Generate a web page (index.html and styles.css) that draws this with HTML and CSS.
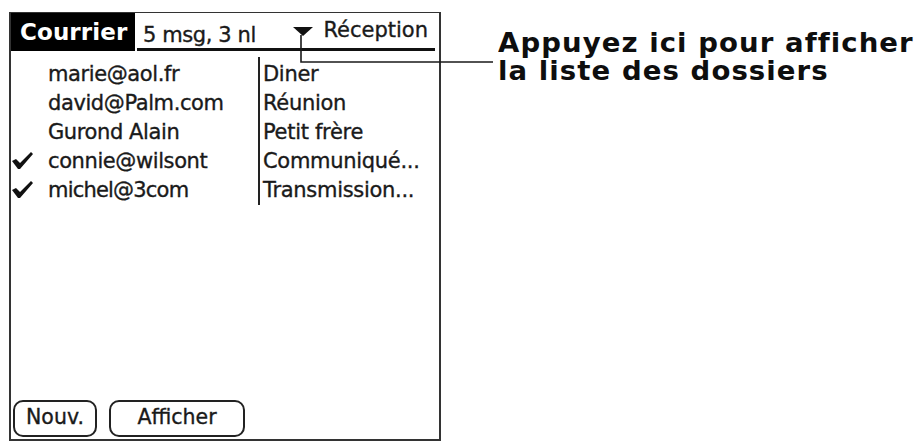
FILE: index.html
```html
<!DOCTYPE html>
<html lang="fr">
<head>
<meta charset="utf-8">
<title>Courrier</title>
<link rel="stylesheet" href="styles.css">
</head>
<body>
<div class="page">
  <div class="device">
    <div class="titlebar">
      <div class="title">Courrier</div>
      <div class="titlerest">
        <span class="count">5 msg, 3 nl</span>
        <span class="folder">
          <svg class="tri" width="20" height="9" viewBox="0 0 20 9"><polygon points="0,0 20,0 10,9" fill="#111"/></svg>
          <span class="folder-name">Réception</span>
        </span>
      </div>
    </div>
    <div class="list">
      <div class="col-names">
        <div class="row"><span class="mark"></span><span>marie@aol.fr</span></div>
        <div class="row"><span class="mark"></span><span>david@Palm.com</span></div>
        <div class="row"><span class="mark"></span><span>Gurond Alain</span></div>
        <div class="row"><span class="mark"><svg width="21" height="17" viewBox="0 0 21 17"><path d="M0 9 L4 7 L8 11 L19 0 L21 2 L8 17 L6 17 Z" fill="#111"/></svg></span><span>connie@wilsont</span></div>
        <div class="row"><span class="mark"><svg width="21" height="17" viewBox="0 0 21 17"><path d="M0 9 L4 7 L8 11 L19 0 L21 2 L8 17 L6 17 Z" fill="#111"/></svg></span><span class="tight">michel@3com</span></div>
      </div>
      <div class="col-subjects">
        <div class="row">Diner</div>
        <div class="row">Réunion</div>
        <div class="row">Petit frère</div>
        <div class="row">Communiqué...</div>
        <div class="row">Transmission...</div>
      </div>
    </div>
    <div class="buttons">
      <div class="btn btn-new">Nouv.</div>
      <div class="btn btn-show">Afficher</div>
    </div>
  </div>
  <div class="callout">
    <div class="callout-line">Appuyez ici pour afficher</div>
    <div class="callout-line">la liste des dossiers</div>
  </div>
  <svg class="connector" width="920" height="446" viewBox="0 0 920 446">
    <path d="M301 35 V62 H493" fill="none" stroke="#1a1a1a" stroke-width="1.6"/>
  </svg>
</div>
</body>
</html>
```
FILE: styles.css
```css
html, body {
  margin: 0;
  padding: 0;
  background: #fff;
}

body {
  font-family: "DejaVu Sans", "Noto Sans", sans-serif;
  color: #1a1a1a;
}

.page {
  position: relative;
  width: 920px;
  height: 446px;
  display: flex;
  align-items: flex-start;
  overflow: hidden;
}

.device {
  margin: 12px 0 0 9px;
  width: 432px;
  height: 429px;
  box-sizing: border-box;
  border: 2px solid #333;
  border-top-width: 1px;
  display: flex;
  flex-direction: column;
}

.titlebar {
  display: flex;
  height: 38px;
}

.title {
  width: 124px;
  box-sizing: border-box;
  padding-left: 9px;
  background: #000;
  color: #fff;
  font-weight: bold;
  font-size: 23px;
  line-height: 38px;
  letter-spacing: 0.1px;
}

.titlerest {
  flex: 1;
  margin: 0 4px 0 2px;
  box-sizing: border-box;
  height: 38px;
  border-bottom: 3px solid #111;
  display: flex;
  align-items: flex-start;
  font-size: 21px;
  line-height: 24px;
  -webkit-text-stroke: 0.35px #1a1a1a;
}

.count {
  padding: 10px 0 0 6px;
  letter-spacing: -0.4px;
}

.folder {
  margin-left: auto;
  padding: 5px 7px 0 0;
  display: flex;
  align-items: flex-start;
}

.tri {
  margin-top: 9px;
  margin-right: 10px;
}

.list {
  display: flex;
  margin-top: 6px;
  font-size: 21px;
  line-height: 29px;
  -webkit-text-stroke: 0.35px #1a1a1a;
}

.col-names {
  width: 247px;
  padding-top: 3px;
  letter-spacing: -0.4px;
}

.col-names .row {
  display: flex;
  height: 29px;
}

.mark {
  width: 37px;
  flex: none;
  display: flex;
  align-items: flex-start;
}

.mark svg {
  margin: 5px 0 0 1px;
}

.tight {
  letter-spacing: -0.8px;
}

.col-subjects {
  border-left: 2px solid #222;
  padding: 3px 0 0 3px;
  letter-spacing: -0.3px;
}

.col-subjects .row {
  height: 29px;
  white-space: nowrap;
}

.buttons {
  margin-top: auto;
  display: flex;
  gap: 12px;
  padding: 0 0 2px 2px;
}

.btn {
  height: 37px;
  box-sizing: border-box;
  border: 2px solid #222;
  border-radius: 10px;
  display: flex;
  align-items: center;
  justify-content: center;
  font-size: 20.5px;
  line-height: 1;
  padding-bottom: 2px;
  -webkit-text-stroke: 0.35px #1a1a1a;
}

.btn-new {
  width: 84px;
}

.btn-show {
  width: 136px;
}

.callout {
  margin: 29px 0 0 57px;
  font-weight: bold;
  font-size: 26px;
  line-height: 28px;
  letter-spacing: 1px;
  color: #0e0e0e;
  white-space: nowrap;
  transform: scaleX(1.06);
  transform-origin: left top;
}

.callout-line {
  height: 28px;
}

.connector {
  position: absolute;
  left: 0;
  top: 0;
  pointer-events: none;
}
```
